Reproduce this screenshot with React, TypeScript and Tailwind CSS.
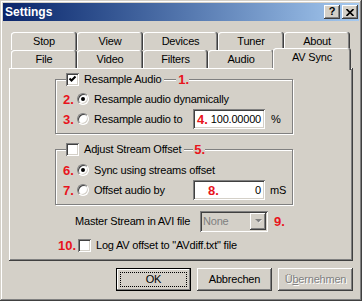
import React from "react";

const raised = "shadow-[inset_-1px_-1px_0_#404040,inset_1px_1px_0_#fff,inset_-2px_-2px_0_#808080]";
const sunken = "shadow-[inset_1px_1px_0_#808080,inset_-1px_-1px_0_#fff,inset_2px_2px_0_#404040,inset_-2px_-2px_0_#d4d0c8]";

function Num({ children, className = "" }: { children: React.ReactNode; className?: string }) {
  return <span className={`font-bold text-[13px] leading-none tracking-normal text-[#e8141c] ${className}`}>{children}</span>;
}

function CheckBox({ checked }: { checked?: boolean }) {
  return (
    <span className={`w-[13px] h-[13px] bg-white ${sunken} flex items-center justify-center shrink-0`}>
      {checked && (
        <svg width="13" height="13" viewBox="0 0 13 13">
          <path d="M3.5 5.5 L5.5 7.5 L9.5 3.5" stroke="#000" strokeWidth="2" fill="none" />
        </svg>
      )}
    </span>
  );
}

function Radio({ on }: { on?: boolean }) {
  return (
    <span className="w-[12px] h-[12px] rounded-full bg-white border border-t-[#808080] border-l-[#808080] border-r-white border-b-white shadow-[inset_1px_1px_0_#404040,inset_-1px_-1px_0_#d4d0c8] flex items-center justify-center shrink-0">
      {on && <span className="w-[4px] h-[4px] rounded-full bg-black" />}
    </span>
  );
}

function Tab({ label, w }: { label: string; w: string }) {
  return (
    <div className={`${w} h-[18px] shrink-0 rounded-t-[3px] shadow-[inset_-1px_0_0_#404040,inset_1px_1px_0_#fff,inset_-2px_0_0_#808080] flex items-center justify-center pt-[1px]`}>
      {label}
    </div>
  );
}

export default function App() {
  return (
    <div className={`w-[362px] h-[301px] bg-[#d4d0c8] p-[3px] text-[11px] tracking-[-0.2px] leading-none text-black font-['Liberation_Sans',Arial,sans-serif] shadow-[inset_-1px_-1px_0_#404040,inset_1px_1px_0_#d4d0c8,inset_-2px_-2px_0_#808080,inset_2px_2px_0_#fff]`}>
      {/* title bar */}
      <div className="h-[18px] bg-linear-to-r from-[#0a246a] to-[#a6caf0] flex items-center pl-[2px] pr-[1px]">
        <span className="text-white font-bold text-[12px] tracking-normal">Settings</span>
        <div className="ml-auto flex gap-[2px]">
          <div className={`w-[16px] h-[14px] bg-[#d4d0c8] ${raised} flex items-center justify-center font-bold text-[11px] pb-[1px]`}>?</div>
          <div className={`w-[16px] h-[14px] bg-[#d4d0c8] ${raised} flex items-center justify-center`}>
            <svg width="8" height="7" viewBox="0 0 8 7">
              <path d="M0.5 0 L7.5 7 M7.5 0 L0.5 7" stroke="#000" strokeWidth="1.6" />
            </svg>
          </div>
        </div>
      </div>

      {/* tabs */}
      <div className="mt-[11px] ml-[8px] flex">
        <Tab label="Stop" w="w-[66px]" />
        <Tab label="View" w="w-[66px]" />
        <Tab label="Devices" w="w-[75px]" />
        <Tab label="Tuner" w="w-[66px]" />
        <Tab label="About" w="w-[66px]" />
      </div>
      <div className="ml-[8px] flex h-[18px] items-start">
        <Tab label="File" w="w-[66px]" />
        <Tab label="Video" w="w-[66px]" />
        <Tab label="Filters" w="w-[65px]" />
        <Tab label="Audio" w="w-[66px]" />
        <div className="relative z-10 -mt-[2px] -ml-[1px] w-[78px] h-[22px] bg-[#d4d0c8] rounded-t-[3px] shadow-[inset_-1px_0_0_#404040,inset_1px_1px_0_#fff,inset_-2px_0_0_#808080] flex items-center justify-center pb-[4px]">
          AV Sync
        </div>
      </div>

      {/* panel */}
      <div className={`mx-[6px] h-[193px] ${raised} flex flex-col pt-[5px]`}>
        <fieldset className="ml-[46px] w-[238px] border border-[#808080] shadow-[1px_1px_0_#fff,inset_1px_1px_0_#fff]">
          <legend className="ml-[10px] p-0">
            <span className="flex items-center h-[13px] bg-[#d4d0c8]">
              <CheckBox checked />
              <span className="ml-[5px]">Resample Audio</span>
              <span className="self-start mt-[6px] ml-[3px] w-[12px] h-[2px] border-t border-t-[#808080] border-b border-b-white" />
              <Num className="ml-[2px]">1.</Num>
            </span>
          </legend>
          <div className="pt-[3px] pb-[4px]">
            <div className="flex items-center h-[20px] pl-[7px]">
              <Num className="w-[14px]">2.</Num>
              <Radio on />
              <span className="ml-[5px]">Resample audio dynamically</span>
            </div>
            <div className="flex items-center h-[20px] pl-[7px]">
              <Num className="w-[14px]">3.</Num>
              <Radio />
              <span className="ml-[5px] w-[99px]">Resample audio to</span>
              <div className={`w-[72px] h-[20px] bg-white ${sunken} flex items-center px-[4px]`}>
                <Num>4.</Num>
                <span className="flex-1 text-right">100.00000</span>
              </div>
              <span className="ml-[6px]">%</span>
            </div>
          </div>
        </fieldset>

        <fieldset className="mt-[9px] ml-[46px] w-[238px] border border-[#808080] shadow-[1px_1px_0_#fff,inset_1px_1px_0_#fff]">
          <legend className="ml-[10px] p-0">
            <span className="flex items-center h-[13px] bg-[#d4d0c8]">
              <CheckBox />
              <span className="ml-[5px]">Adjust Stream Offset</span>
              <span className="self-start mt-[6px] ml-[3px] w-[9px] h-[2px] border-t border-t-[#808080] border-b border-b-white" />
              <Num className="ml-[1px]">5.</Num>
            </span>
          </legend>
          <div className="pt-[4px] pb-[4px]">
            <div className="flex items-center h-[20px] pl-[7px]">
              <Num className="w-[14px]">6.</Num>
              <Radio on />
              <span className="ml-[5px]">Sync using streams offset</span>
            </div>
            <div className="flex items-center h-[20px] pl-[7px]">
              <Num className="w-[14px]">7.</Num>
              <Radio />
              <span className="ml-[5px] w-[99px]">Offset audio by</span>
              <div className={`w-[72px] h-[20px] bg-white ${sunken} flex items-center px-[4px]`}>
                <Num className="ml-[11px]">8.</Num>
                <span className="flex-1 text-right">0</span>
              </div>
              <span className="ml-[5px]">mS</span>
            </div>
          </div>
        </fieldset>

        <div className="mt-[6px] ml-[66px] flex items-center h-[21px]">
          <span className="w-[125px]">Master Stream in AVI file</span>
          <div className={`w-[68px] h-[21px] bg-[#d4d0c8] ${sunken} flex items-center pl-[3px] pr-[2px]`}>
            <span className="flex-1 text-[#808080]">None</span>
            <div className={`w-[16px] h-[17px] ${raised} flex items-center justify-center`}>
              <svg width="7" height="5" viewBox="0 0 7 5">
                <path d="M1 1 L7 1 L4 4 Z" fill="#fff" />
                <path d="M0 0 L7 0 L3.5 3.5 Z" fill="#808080" />
              </svg>
            </div>
          </div>
          <Num className="ml-[6px]">9.</Num>
        </div>

        <div className="mt-[7px] ml-[49px] flex items-center h-[13px]">
          <Num className="w-[20px]">10.</Num>
          <CheckBox />
          <span className="ml-[5px]">Log AV offset to "AVdiff.txt" file</span>
        </div>
      </div>

      {/* buttons */}
      <div className="mt-[7px] mr-[6px] flex justify-end gap-[6px]">
        <div className="relative w-[75px] h-[23px] border border-black shadow-[inset_-1px_-1px_0_#808080,inset_1px_1px_0_#fff] flex items-center justify-center">
          OK
          <span className="absolute inset-[3px] border border-dotted border-black" />
        </div>
        <div className={`w-[75px] h-[23px] ${raised} flex items-center justify-center`}>Abbrechen</div>
        <div className={`w-[75px] h-[23px] ${raised} flex items-center justify-center text-[#808080] [text-shadow:1px_1px_0_#fff]`}>
          <span>
            Ü<span className="underline">b</span>ernehmen
          </span>
        </div>
      </div>
    </div>
  );
}
